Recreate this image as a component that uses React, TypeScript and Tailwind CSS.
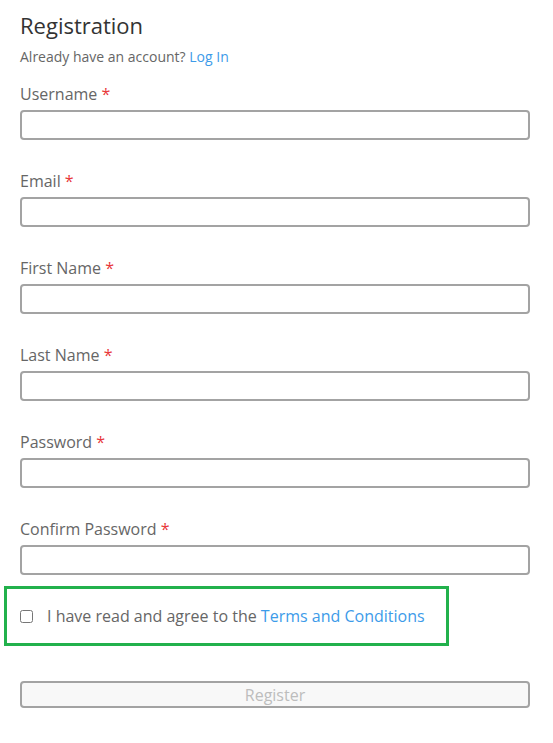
import { useState } from "react";

const fields = ["Username", "Email", "First Name", "Last Name", "Password", "Confirm Password"];

const App = () => {
  const [agreed, setAgreed] = useState(false);

  return (
    <div className="min-h-[743px] w-full bg-white px-5 pt-[10px] font-['Open_Sans',sans-serif]">
      <h1 className="text-[22px] leading-[30px] text-[#333333]">Registration</h1>
      <p className="mt-[7px] text-[14px] leading-[20px] text-[#666666]">
        Already have an account? <a className="text-[#3d9be9]">Log In</a>
      </p>

      <form className="mt-4 flex flex-col gap-[30px]">
        {fields.map((name) => (
          <div key={name} className="flex flex-col gap-[5px]">
            <label className="text-[16px] leading-[22px] text-[#666666]">
              {name} <span className="text-[#e8373a]">*</span>
            </label>
            <input
              type={name.includes("Password") ? "password" : "text"}
              className="h-[30px] w-[510px] rounded-[4px] border-2 border-[#a3a3a3] bg-white px-2 text-[14px] focus:outline-none"
            />
          </div>
        ))}
      </form>

      <div className="-ml-4 mt-[11px] flex h-[60px] w-[445px] items-center gap-[14px] border-[3px] border-[#22b14c] pl-[13px]">
        <input
          type="checkbox"
          checked={agreed}
          onChange={(e) => setAgreed(e.target.checked)}
          className="m-0 h-[13px] w-[13px]"
        />
        <span className="text-[16px] leading-[22px] text-[#666666]">
          I have read and agree to the <a className="text-[#3d9be9]">Terms and Conditions</a>
        </span>
      </div>

      <button
        disabled={!agreed}
        className="mt-[35px] h-[27px] w-[510px] rounded-[4px] border-2 border-[#a3a3a3] bg-[#f8f8f8] text-[16px] leading-[20px] text-[#bdbdbd]"
      >
        Register
      </button>
    </div>
  );
};

export default App;
